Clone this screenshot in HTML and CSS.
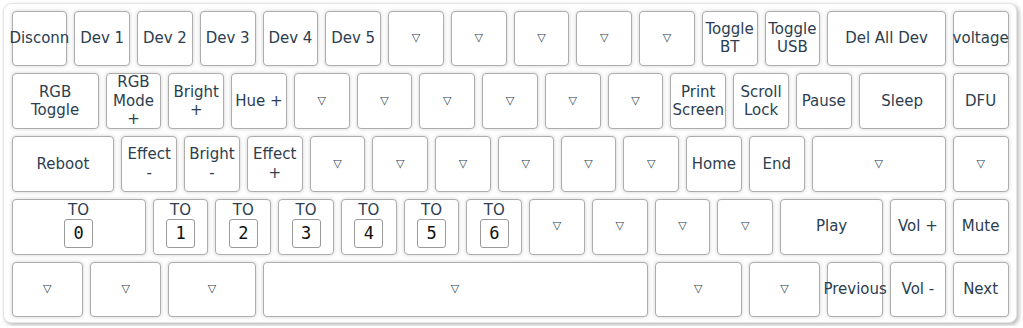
FILE: index.html
```html
<!DOCTYPE html>
<html lang="en">
<head>
  <meta charset="UTF-8">
  <meta name="viewport" content="width=device-width, initial-scale=1.0">
  <title>Keymap</title>
  <link rel="stylesheet" href="styles.css">
</head>
<body>
  <div class="board">
    <div class="row">
      <div class="key">Disconn</div>
      <div class="key">Dev 1</div>
      <div class="key">Dev 2</div>
      <div class="key">Dev 3</div>
      <div class="key">Dev 4</div>
      <div class="key">Dev 5</div>
      <div class="key tri">▽</div>
      <div class="key tri">▽</div>
      <div class="key tri">▽</div>
      <div class="key tri">▽</div>
      <div class="key tri">▽</div>
      <div class="key">Toggle BT</div>
      <div class="key">Toggle USB</div>
      <div class="key u2">Del All Dev</div>
      <div class="key">voltage</div>
    </div>
    <div class="row">
      <div class="key u15">RGB Toggle</div>
      <div class="key">RGB Mode +</div>
      <div class="key">Bright +</div>
      <div class="key">Hue +</div>
      <div class="key tri">▽</div>
      <div class="key tri">▽</div>
      <div class="key tri">▽</div>
      <div class="key tri">▽</div>
      <div class="key tri">▽</div>
      <div class="key tri">▽</div>
      <div class="key">Print Screen</div>
      <div class="key">Scroll Lock</div>
      <div class="key">Pause</div>
      <div class="key u15">Sleep</div>
      <div class="key">DFU</div>
    </div>
    <div class="row">
      <div class="key u175">Reboot</div>
      <div class="key">Effect -</div>
      <div class="key">Bright -</div>
      <div class="key">Effect +</div>
      <div class="key tri">▽</div>
      <div class="key tri">▽</div>
      <div class="key tri">▽</div>
      <div class="key tri">▽</div>
      <div class="key tri">▽</div>
      <div class="key tri">▽</div>
      <div class="key">Home</div>
      <div class="key">End</div>
      <div class="key u225 tri">▽</div>
      <div class="key tri">▽</div>
    </div>
    <div class="row">
      <div class="key u225 to"><span>TO</span><input type="text" value="0"></div>
      <div class="key to"><span>TO</span><input type="text" value="1"></div>
      <div class="key to"><span>TO</span><input type="text" value="2"></div>
      <div class="key to"><span>TO</span><input type="text" value="3"></div>
      <div class="key to"><span>TO</span><input type="text" value="4"></div>
      <div class="key to"><span>TO</span><input type="text" value="5"></div>
      <div class="key to"><span>TO</span><input type="text" value="6"></div>
      <div class="key tri">▽</div>
      <div class="key tri">▽</div>
      <div class="key tri">▽</div>
      <div class="key tri">▽</div>
      <div class="key u175">Play</div>
      <div class="key">Vol +</div>
      <div class="key">Mute</div>
    </div>
    <div class="row">
      <div class="key u125 tri">▽</div>
      <div class="key u125 tri">▽</div>
      <div class="key u15 tri">▽</div>
      <div class="key u625 tri">▽</div>
      <div class="key u15 tri">▽</div>
      <div class="key u125 tri">▽</div>
      <div class="key">Previous</div>
      <div class="key">Vol -</div>
      <div class="key">Next</div>
    </div>
  </div>
</body>
</html>
```
FILE: styles.css
```css
body{
  margin: 0;
  background: #fff;
  font-family: "DejaVu Sans", sans-serif;
  color: #2c3e50;
}
.board{
  box-sizing: border-box;
  width: 1014px;
  margin: 3px;
  padding: 3px 4px 1px;
  border: 1px solid #e4e4e4;
  border-radius: 8px;
  box-shadow: 2px 2px 4px rgba(0,0,0,0.28);
  background: #fff;
}
.row{
  display: flex;
  height: 62.75px;
}
.key{
  --w: 1;
  box-sizing: border-box;
  flex: none;
  width: calc(var(--w) * 62.75px - 7px);
  height: 55.75px;
  margin: 3.5px;
  padding: 0 2px;
  border: 1px solid #adadad;
  border-radius: 4px;
  box-shadow: 0 0 4px rgba(0,0,0,0.18);
  background: #fff;
  display: flex;
  align-items: center;
  justify-content: center;
  text-align: center;
  font-size: 15px;
  line-height: 18.5px;
}
.u125{ --w: 1.25; }
.u15{ --w: 1.5; }
.u175{ --w: 1.75; }
.u2{ --w: 2; }
.u225{ --w: 2.25; }
.u625{ --w: 6.25; }
.tri{ font-size: 11px; }
.to{
  flex-direction: column;
  justify-content: flex-start;
  padding-top: 1px;
}
.to span{ line-height: 18px; }
.to input{
  box-sizing: border-box;
  width: 29px;
  height: 29px;
  padding: 0;
  border: 1px solid #9a9a9a;
  border-radius: 3px;
  font-family: "DejaVu Sans Mono", monospace;
  font-size: 17px;
  text-align: center;
  color: #111;
}
```
